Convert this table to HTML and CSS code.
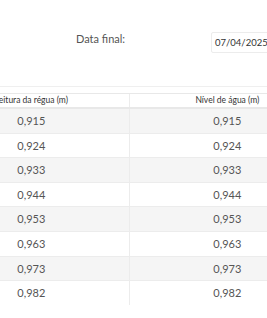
FILE: index.html
```html
<!DOCTYPE html>
<html lang="pt-BR">
<head>
<meta charset="utf-8">
<title>Leituras</title>
<link rel="stylesheet" href="styles.css">
</head>
<body>
<div class="page">
  <div class="filters">
    <label class="label">Data final:</label>
    <div class="date-input">07/04/2025</div>
  </div>
  <hr class="divider">
  <table class="data">
    <thead>
      <tr><th>Leitura da régua (m)</th><th>Nível de água (m)</th></tr>
    </thead>
    <tbody>
      <tr><td>0,915</td><td>0,915</td></tr>
      <tr><td>0,924</td><td>0,924</td></tr>
      <tr><td>0,933</td><td>0,933</td></tr>
      <tr><td>0,944</td><td>0,944</td></tr>
      <tr><td>0,953</td><td>0,953</td></tr>
      <tr><td>0,963</td><td>0,963</td></tr>
      <tr><td>0,973</td><td>0,973</td></tr>
      <tr><td>0,982</td><td>0,982</td></tr>
    </tbody>
  </table>
</div>
</body>
</html>
```
FILE: styles.css
```css
html, body {
  margin: 0;
  padding: 0;
  background: #fff;
  overflow: hidden;
}
body {
  font-family: Lato, "Open Sans", sans-serif;
  color: #333;
}
.page {
  width: 392px;
  margin-left: -67px;
}
.filters {
  display: flex;
  align-items: flex-start;
  padding: 32px 0 0 143px;
}
.label {
  width: 135px;
  font-size: 11px;
  line-height: 14px;
  color: #555;
}
.date-input {
  width: 100px;
  height: 19px;
  border: 1px solid #ececec;
  border-radius: 2px;
  padding: 0 3px;
  font-size: 9.5px;
  line-height: 19px;
  color: #333;
}
.divider {
  border: 0;
  border-top: 1px solid #efefef;
  margin: 33px 0 6px;
}
.data {
  width: 392px;
  border-collapse: collapse;
  table-layout: fixed;
}
.data th {
  font-size: 8.5px;
  font-weight: normal;
  color: #333;
  line-height: 13px;
  padding: 0;
  border-top: 1px solid #e8e8e8;
  border-bottom: 2px solid #e8e8e8;
  border-left: 1px solid #ececec;
}
.data td {
  font-size: 11px;
  color: #555;
  text-align: center;
  line-height: 13.6px;
  padding: 5px 0;
  border-bottom: 1px solid #ececec;
  border-left: 1px solid #ececec;
}
.data tbody tr:last-child td {
  border-bottom: 0;
}
.data tbody tr:nth-child(odd) td {
  background: #f5f5f5;
}
```
